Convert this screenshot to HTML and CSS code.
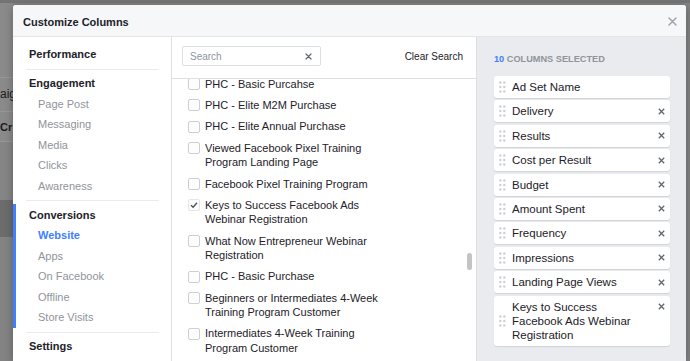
FILE: index.html
```html
<!DOCTYPE html>
<html lang="en">
<head>
    <meta charset="UTF-8">
    <meta name="viewport" content="width=device-width, initial-scale=1.0">
    <title>Customize Columns</title>
    <link rel="stylesheet" href="styles.css">
</head>
<body>
    <div class="screen">
        <!-- Page behind the dialog -->
        <div class="page-edge">
            <div class="edge-top"></div>
            <div class="edge-row"><span>aign</span></div>
            <div class="edge-row edge-bold"><span>Cr</span></div>
            <div class="edge-gap"></div>
            <div class="edge-dark"></div>
        </div>

        <div class="modal">
            <div class="modal-header">
                <span class="modal-title">Customize Columns</span>
                <svg class="modal-close" width="9" height="9" viewBox="0 0 9 9"><path d="M1 1L8 8M8 1L1 8" stroke="#a0a4ab" stroke-width="1.5" stroke-linecap="round"/></svg>
            </div>

            <div class="modal-body">
                <!-- Categories -->
                <nav class="sidebar">
                    <div class="nav-section">
                        <div class="nav-heading">Performance</div>
                    </div>
                    <div class="nav-section">
                        <div class="nav-heading">Engagement</div>
                        <div class="nav-item">Page Post</div>
                        <div class="nav-item">Messaging</div>
                        <div class="nav-item">Media</div>
                        <div class="nav-item">Clicks</div>
                        <div class="nav-item">Awareness</div>
                    </div>
                    <div class="nav-section current">
                        <div class="nav-heading">Conversions</div>
                        <div class="nav-item active">Website</div>
                        <div class="nav-item">Apps</div>
                        <div class="nav-item">On Facebook</div>
                        <div class="nav-item">Offline</div>
                        <div class="nav-item">Store Visits</div>
                    </div>
                    <div class="nav-section">
                        <div class="nav-heading">Settings</div>
                    </div>
                </nav>

                <!-- Options -->
                <div class="picker">
                    <div class="search-bar">
                        <div class="search-box">
                            <span class="search-placeholder">Search</span>
                            <svg width="7" height="7" viewBox="0 0 7 7"><path d="M1 1L6 6M6 1L1 6" stroke="#606770" stroke-width="1.2" stroke-linecap="round"/></svg>
                        </div>
                        <span class="clear-search">Clear Search</span>
                    </div>
                    <div class="option-list">
                        <div class="scroll-thumb"></div>
                        <ul class="options">
                            <li class="option"><span class="checkbox"></span><span class="option-label">PHC - Basic Purcahse</span></li>
                            <li class="option"><span class="checkbox"></span><span class="option-label">PHC - Elite M2M Purchase</span></li>
                            <li class="option"><span class="checkbox"></span><span class="option-label">PHC - Elite Annual Purchase</span></li>
                            <li class="option"><span class="checkbox"></span><span class="option-label">Viewed Facebook Pixel Training Program Landing Page</span></li>
                            <li class="option"><span class="checkbox"></span><span class="option-label">Facebook Pixel Training Program</span></li>
                            <li class="option"><span class="checkbox checked"><svg width="10" height="10" viewBox="0 0 10 10"><path d="M2 5.2L4.1 7.3L8 2.8" fill="none" stroke="#4b4f56" stroke-width="1.3"/></svg></span><span class="option-label">Keys to Success Facebook Ads Webinar Registration</span></li>
                            <li class="option"><span class="checkbox"></span><span class="option-label">What Now Entrepreneur Webinar Registration</span></li>
                            <li class="option"><span class="checkbox"></span><span class="option-label">PHC - Basic Purchase</span></li>
                            <li class="option"><span class="checkbox"></span><span class="option-label">Beginners or Intermediates 4-Week Training Program Customer</span></li>
                            <li class="option"><span class="checkbox"></span><span class="option-label">Intermediates 4-Week Training Program Customer</span></li>
                            <li class="option"><span class="checkbox"></span><span class="option-label">Beginners 4-Week Training Program Customer</span></li>
                        </ul>
                    </div>
                </div>

                <!-- Selected columns -->
                <div class="selected">
                    <div class="selected-count"><span class="count">10</span> Columns Selected</div>
                    <div class="column-item">
                        <svg class="grip" width="7" height="12" viewBox="0 0 7 12"><circle cx="1.3" cy="1.5" r="1.2"/><circle cx="5.3" cy="1.5" r="1.2"/><circle cx="1.3" cy="6" r="1.2"/><circle cx="5.3" cy="6" r="1.2"/><circle cx="1.3" cy="10.5" r="1.2"/><circle cx="5.3" cy="10.5" r="1.2"/></svg>
                        <span class="column-name">Ad Set Name</span>
                    </div>
                    <div class="column-item">
                        <svg class="grip" width="7" height="12" viewBox="0 0 7 12"><circle cx="1.3" cy="1.5" r="1.2"/><circle cx="5.3" cy="1.5" r="1.2"/><circle cx="1.3" cy="6" r="1.2"/><circle cx="5.3" cy="6" r="1.2"/><circle cx="1.3" cy="10.5" r="1.2"/><circle cx="5.3" cy="10.5" r="1.2"/></svg>
                        <span class="column-name">Delivery</span>
                        <svg class="remove" width="7" height="7" viewBox="0 0 7 7"><path d="M0.8 0.8L6.2 6.2M6.2 0.8L0.8 6.2" stroke="#606770" stroke-width="1.3"/></svg>
                    </div>
                    <div class="column-item">
                        <svg class="grip" width="7" height="12" viewBox="0 0 7 12"><circle cx="1.3" cy="1.5" r="1.2"/><circle cx="5.3" cy="1.5" r="1.2"/><circle cx="1.3" cy="6" r="1.2"/><circle cx="5.3" cy="6" r="1.2"/><circle cx="1.3" cy="10.5" r="1.2"/><circle cx="5.3" cy="10.5" r="1.2"/></svg>
                        <span class="column-name">Results</span>
                        <svg class="remove" width="7" height="7" viewBox="0 0 7 7"><path d="M0.8 0.8L6.2 6.2M6.2 0.8L0.8 6.2" stroke="#606770" stroke-width="1.3"/></svg>
                    </div>
                    <div class="column-item">
                        <svg class="grip" width="7" height="12" viewBox="0 0 7 12"><circle cx="1.3" cy="1.5" r="1.2"/><circle cx="5.3" cy="1.5" r="1.2"/><circle cx="1.3" cy="6" r="1.2"/><circle cx="5.3" cy="6" r="1.2"/><circle cx="1.3" cy="10.5" r="1.2"/><circle cx="5.3" cy="10.5" r="1.2"/></svg>
                        <span class="column-name">Cost per Result</span>
                        <svg class="remove" width="7" height="7" viewBox="0 0 7 7"><path d="M0.8 0.8L6.2 6.2M6.2 0.8L0.8 6.2" stroke="#606770" stroke-width="1.3"/></svg>
                    </div>
                    <div class="column-item">
                        <svg class="grip" width="7" height="12" viewBox="0 0 7 12"><circle cx="1.3" cy="1.5" r="1.2"/><circle cx="5.3" cy="1.5" r="1.2"/><circle cx="1.3" cy="6" r="1.2"/><circle cx="5.3" cy="6" r="1.2"/><circle cx="1.3" cy="10.5" r="1.2"/><circle cx="5.3" cy="10.5" r="1.2"/></svg>
                        <span class="column-name">Budget</span>
                        <svg class="remove" width="7" height="7" viewBox="0 0 7 7"><path d="M0.8 0.8L6.2 6.2M6.2 0.8L0.8 6.2" stroke="#606770" stroke-width="1.3"/></svg>
                    </div>
                    <div class="column-item">
                        <svg class="grip" width="7" height="12" viewBox="0 0 7 12"><circle cx="1.3" cy="1.5" r="1.2"/><circle cx="5.3" cy="1.5" r="1.2"/><circle cx="1.3" cy="6" r="1.2"/><circle cx="5.3" cy="6" r="1.2"/><circle cx="1.3" cy="10.5" r="1.2"/><circle cx="5.3" cy="10.5" r="1.2"/></svg>
                        <span class="column-name">Amount Spent</span>
                        <svg class="remove" width="7" height="7" viewBox="0 0 7 7"><path d="M0.8 0.8L6.2 6.2M6.2 0.8L0.8 6.2" stroke="#606770" stroke-width="1.3"/></svg>
                    </div>
                    <div class="column-item">
                        <svg class="grip" width="7" height="12" viewBox="0 0 7 12"><circle cx="1.3" cy="1.5" r="1.2"/><circle cx="5.3" cy="1.5" r="1.2"/><circle cx="1.3" cy="6" r="1.2"/><circle cx="5.3" cy="6" r="1.2"/><circle cx="1.3" cy="10.5" r="1.2"/><circle cx="5.3" cy="10.5" r="1.2"/></svg>
                        <span class="column-name">Frequency</span>
                        <svg class="remove" width="7" height="7" viewBox="0 0 7 7"><path d="M0.8 0.8L6.2 6.2M6.2 0.8L0.8 6.2" stroke="#606770" stroke-width="1.3"/></svg>
                    </div>
                    <div class="column-item">
                        <svg class="grip" width="7" height="12" viewBox="0 0 7 12"><circle cx="1.3" cy="1.5" r="1.2"/><circle cx="5.3" cy="1.5" r="1.2"/><circle cx="1.3" cy="6" r="1.2"/><circle cx="5.3" cy="6" r="1.2"/><circle cx="1.3" cy="10.5" r="1.2"/><circle cx="5.3" cy="10.5" r="1.2"/></svg>
                        <span class="column-name">Impressions</span>
                        <svg class="remove" width="7" height="7" viewBox="0 0 7 7"><path d="M0.8 0.8L6.2 6.2M6.2 0.8L0.8 6.2" stroke="#606770" stroke-width="1.3"/></svg>
                    </div>
                    <div class="column-item">
                        <svg class="grip" width="7" height="12" viewBox="0 0 7 12"><circle cx="1.3" cy="1.5" r="1.2"/><circle cx="5.3" cy="1.5" r="1.2"/><circle cx="1.3" cy="6" r="1.2"/><circle cx="5.3" cy="6" r="1.2"/><circle cx="1.3" cy="10.5" r="1.2"/><circle cx="5.3" cy="10.5" r="1.2"/></svg>
                        <span class="column-name">Landing Page Views</span>
                        <svg class="remove" width="7" height="7" viewBox="0 0 7 7"><path d="M0.8 0.8L6.2 6.2M6.2 0.8L0.8 6.2" stroke="#606770" stroke-width="1.3"/></svg>
                    </div>
                    <div class="column-item">
                        <svg class="grip" width="7" height="12" viewBox="0 0 7 12"><circle cx="1.3" cy="1.5" r="1.2"/><circle cx="5.3" cy="1.5" r="1.2"/><circle cx="1.3" cy="6" r="1.2"/><circle cx="5.3" cy="6" r="1.2"/><circle cx="1.3" cy="10.5" r="1.2"/><circle cx="5.3" cy="10.5" r="1.2"/></svg>
                        <span class="column-name narrow">Keys to Success Facebook Ads Webinar Registration</span>
                        <svg class="remove" width="7" height="7" viewBox="0 0 7 7"><path d="M0.8 0.8L6.2 6.2M6.2 0.8L0.8 6.2" stroke="#606770" stroke-width="1.3"/></svg>
                    </div>
                </div>
            </div>
        </div>
    </div>
</body>
</html>
```

FILE: styles.css
```css
* { box-sizing: border-box; }
html, body { margin: 0; height: 100%; }
body {
    font-family: "Liberation Sans", Helvetica, Arial, sans-serif;
    background-color: #838383;
    color: #1d2129;
    overflow: hidden;
}
.screen {
    display: flex;
    align-items: flex-start;
    height: 361px;
    padding-top: 5px;
    border-top: 3px solid #747474;
}

/* page behind the dialog */
.page-edge {
    width: 13px;
    flex: none;
    margin-top: -5px;
    display: flex;
    flex-direction: column;
    overflow: hidden;
    font-size: 12px;
    color: #1b1b1b;
}
.edge-top { height: 75px; background-color: #8a8a8a; border-bottom: 1px solid #979797; }
.edge-row {
    height: 34px;
    line-height: 32px;
    background-color: #8a8a8a;
    border-bottom: 1px solid #979797;
    white-space: nowrap;
}
.edge-bold { font-weight: bold; font-size: 11px; height: 30px; line-height: 30px; }
.edge-gap { height: 58px; background-color: #858585; }
.edge-dark { height: 37px; background-color: #6c6c6c; }

/* dialog */
.modal {
    width: 673px;
    flex: none;
    margin-top: -3px;
    background-color: #ffffff;
    border-radius: 3px 3px 0 0;
    box-shadow: 0 2px 8px rgba(0, 0, 0, 0.3);
    display: flex;
    flex-direction: column;
    overflow: hidden;
}
.modal-header {
    height: 32px;
    padding: 2px 9px 0 10px;
    display: flex;
    align-items: center;
    justify-content: space-between;
    background-color: #f6f7f9;
    border-bottom: 1px solid #e5e5e5;
}
.modal-title { font-size: 11px; font-weight: bold; }
.modal-body { display: flex; height: 324px; }

/* categories */
.sidebar {
    width: 159px;
    flex: none;
    padding: 0 12px 0 13px;
    border-right: 1px solid #dddfe2;
}
.nav-section {
    position: relative;
    padding: 3.5px 0 4px;
    border-bottom: 1px solid #e9ebee;
}
.nav-section:first-child { padding-top: 7px; }
.nav-section.current::before {
    content: "";
    position: absolute;
    left: -13px;
    top: 3px;
    bottom: 4px;
    width: 3px;
    background-color: #4080ff;
}
.nav-heading { font-size: 11px; font-weight: bold; line-height: 20.5px; padding-left: 3px; }
.nav-item { font-size: 11px; line-height: 20.5px; padding-left: 12px; color: #90949c; }
.nav-item.active { color: #4080ff; font-weight: bold; }

/* options */
.picker {
    width: 305px;
    flex: none;
    display: flex;
    flex-direction: column;
    border-right: 1px solid #dddfe2;
}
.search-bar {
    height: 42px;
    flex: none;
    padding: 9px 13px 0 10px;
    display: flex;
    align-items: flex-start;
    justify-content: space-between;
    border-bottom: 1px solid #dddfe2;
}
.search-box {
    width: 139px;
    height: 20px;
    padding: 0 8px 0 7px;
    display: flex;
    align-items: center;
    justify-content: space-between;
    border: 1px solid #dddfe2;
    border-radius: 2px;
}
.search-placeholder { font-size: 10px; color: #90949c; }
.clear-search { font-size: 10px; line-height: 20px; margin-top: 1px; color: #1d2129; }
.option-list { position: relative; flex: 1; overflow: hidden; }
.options { list-style: none; margin: -5.5px 0 0; padding: 0 0 0 16px; }
.option {
    display: flex;
    align-items: flex-start;
    gap: 5px;
    padding: 3.4px 0;
    font-size: 11px;
    line-height: 14.5px;
}
.checkbox {
    width: 12px;
    height: 12px;
    flex: none;
    margin-top: 1.25px;
    border: 1px solid #ccd0d5;
    border-radius: 2px;
    background-color: #fdfdfd;
    display: flex;
    align-items: center;
    justify-content: center;
}
.checkbox.checked { border-color: #e4e6e9; }
.option-label { max-width: 192px; }
.scroll-thumb {
    position: absolute;
    right: 4px;
    top: 174px;
    width: 5px;
    height: 17px;
    border-radius: 3px;
    background-color: #c4c4c4;
}

/* selected columns */
.selected {
    flex: 1;
    background-color: #e9ebee;
    padding: 16px 16px 0 17px;
}
.selected-count {
    font-size: 9.2px;
    font-weight: bold;
    line-height: 12px;
    color: #90949c;
    text-transform: uppercase;
    margin-bottom: 11px;
}
.count { color: #4080ff; }
.column-item {
    display: flex;
    align-items: flex-start;
    gap: 6px;
    padding: 4px 5px 4px 5px;
    margin-bottom: 2.4px;
    background-color: #ffffff;
    border-radius: 3px;
    box-shadow: 0 1px 1px rgba(0, 0, 0, 0.1);
    font-size: 11.5px;
    line-height: 14px;
}
.grip { flex: none; align-self: center; fill: #ccd0d5; }
.column-name { flex: 1; }
.column-name.narrow { max-width: 126px; }
.remove { flex: none; margin-top: 3.5px; margin-left: auto; }
```
